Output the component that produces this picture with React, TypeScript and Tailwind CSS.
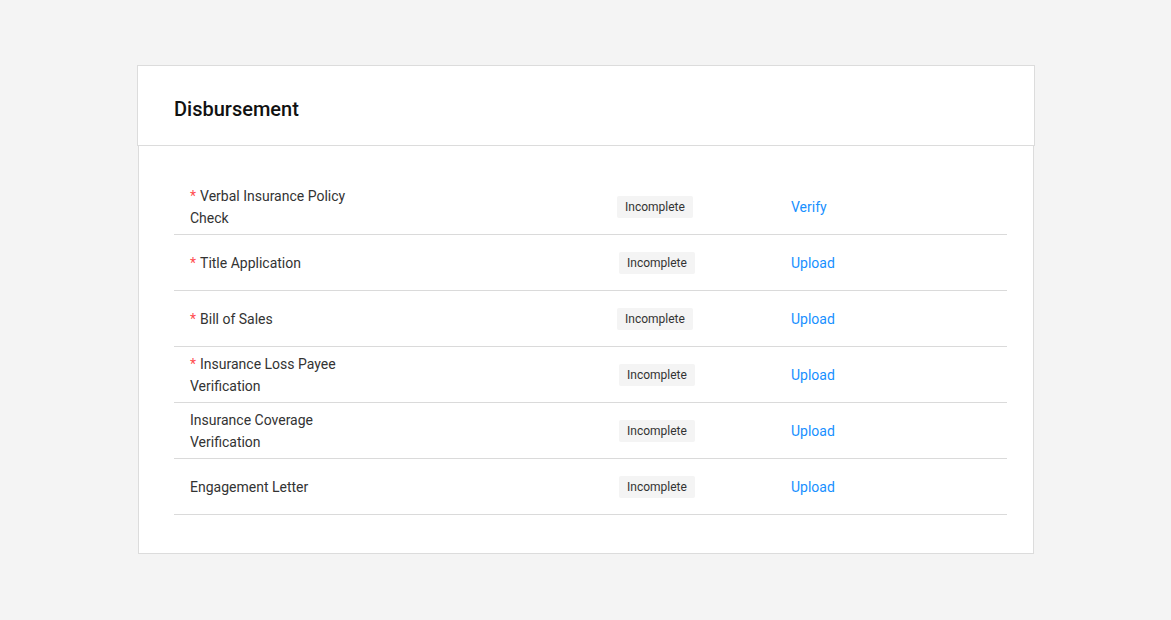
import React from "react";

const rows: { label: string[]; required: boolean; action: string; badgeMl: string }[] = [
  { label: ["Verbal Insurance Policy", "Check"], required: true, action: "Verify", badgeMl: "ml-0" },
  { label: ["Title Application"], required: true, action: "Upload", badgeMl: "ml-[2px]" },
  { label: ["Bill of Sales"], required: true, action: "Upload", badgeMl: "ml-0" },
  { label: ["Insurance Loss Payee", "Verification"], required: true, action: "Upload", badgeMl: "ml-[2px]" },
  { label: ["Insurance Coverage", "Verification"], required: false, action: "Upload", badgeMl: "ml-[2px]" },
  { label: ["Engagement Letter"], required: false, action: "Upload", badgeMl: "ml-[2px]" },
];

export default function App() {
  return (
    <div
      className="min-h-[620px] w-full bg-[#f4f4f4] pt-[65px] pl-[137px]"
      style={{ fontFamily: "Roboto, 'Liberation Sans', sans-serif" }}
    >
      <div className="w-[898px]">
        <div className="h-[81px] border border-[#dcdcdc] bg-white flex items-center pl-[36px] pt-[7px]">
          <h1 className="text-[20px] font-medium text-[#111] leading-none">Disbursement</h1>
        </div>
        <div className="ml-px w-[896px] border-x border-b border-[#dcdcdc] bg-white pt-[33px] pb-[38px] pl-[35px] pr-[26px]">
          {rows.map((r, i) => (
            <div key={i} className="h-[56px] border-b border-[#dadada] flex items-center pl-[16px]">
              <div className="w-[427px] text-[14px] leading-[22px] text-[#333]">
                <div>
                  {r.required && <span className="text-[#ff4d4f] mr-[4px]">*</span>}
                  {r.label[0]}
                </div>
                {r.label[1] && <div>{r.label[1]}</div>}
              </div>
              <div className="w-[174px] flex">
                <span
                  className={`${r.badgeMl} mt-[1px] inline-flex items-center h-[22px] px-[8px] rounded-[2px] bg-[#f4f4f4] text-[12px] text-[#333]`}
                >
                  Incomplete
                </span>
              </div>
              <a className="mt-[2px] text-[14px] text-[#1890ff] cursor-pointer">{r.action}</a>
            </div>
          ))}
        </div>
      </div>
    </div>
  );
}
